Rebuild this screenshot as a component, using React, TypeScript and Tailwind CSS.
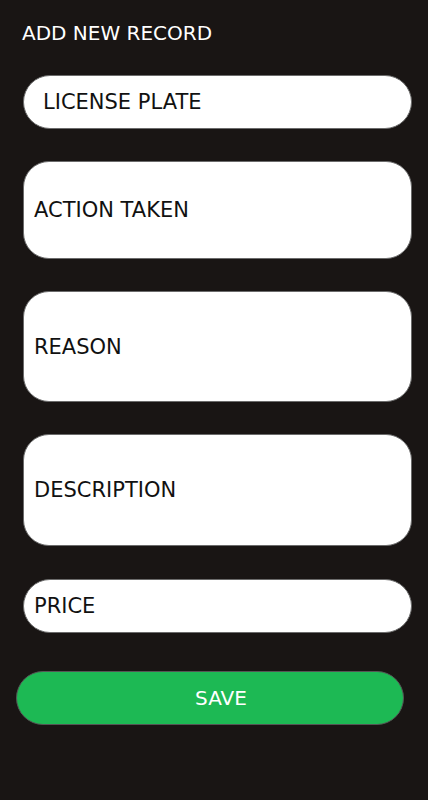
import React from "react";

const font = { fontFamily: '"DejaVu Sans", Verdana, sans-serif' };

export default function App() {
  return (
    <div
      className="w-[428px] h-[800px] bg-[#191514] flex flex-col text-[21px] leading-[24px]"
      style={font}
    >
      <div className="pt-[21px] pl-[22px] text-white h-[45px] text-[20px]">ADD NEW RECORD</div>
      <div className="mt-[30px] ml-[23px] w-[389px] h-[54px] rounded-full bg-white border border-[#6b6b6b] flex items-center pl-[19px] text-[#111]">
        LICENSE PLATE
      </div>
      <div className="mt-[32px] ml-[23px] w-[389px] h-[98px] rounded-[26px] bg-white border border-[#6b6b6b] flex items-center pl-[10px] text-[#111]">
        ACTION TAKEN
      </div>
      <div className="mt-[32px] ml-[23px] w-[389px] h-[111px] rounded-[26px] bg-white border border-[#6b6b6b] flex items-center pl-[10px] text-[#111]">
        REASON
      </div>
      <div className="mt-[32px] ml-[23px] w-[389px] h-[112px] rounded-[26px] bg-white border border-[#6b6b6b] flex items-center pl-[10px] text-[#111]">
        DESCRIPTION
      </div>
      <div className="mt-[33px] ml-[23px] w-[389px] h-[54px] rounded-full bg-white border border-[#6b6b6b] flex items-center pl-[10px] text-[#111]">
        PRICE
      </div>
      <div className="mt-[38px] ml-[16px] w-[388px] h-[54px] rounded-full bg-[#1db954] border border-[#555] flex items-center justify-center pl-[22px] text-white text-[20px]">
        SAVE
      </div>
    </div>
  );
}
